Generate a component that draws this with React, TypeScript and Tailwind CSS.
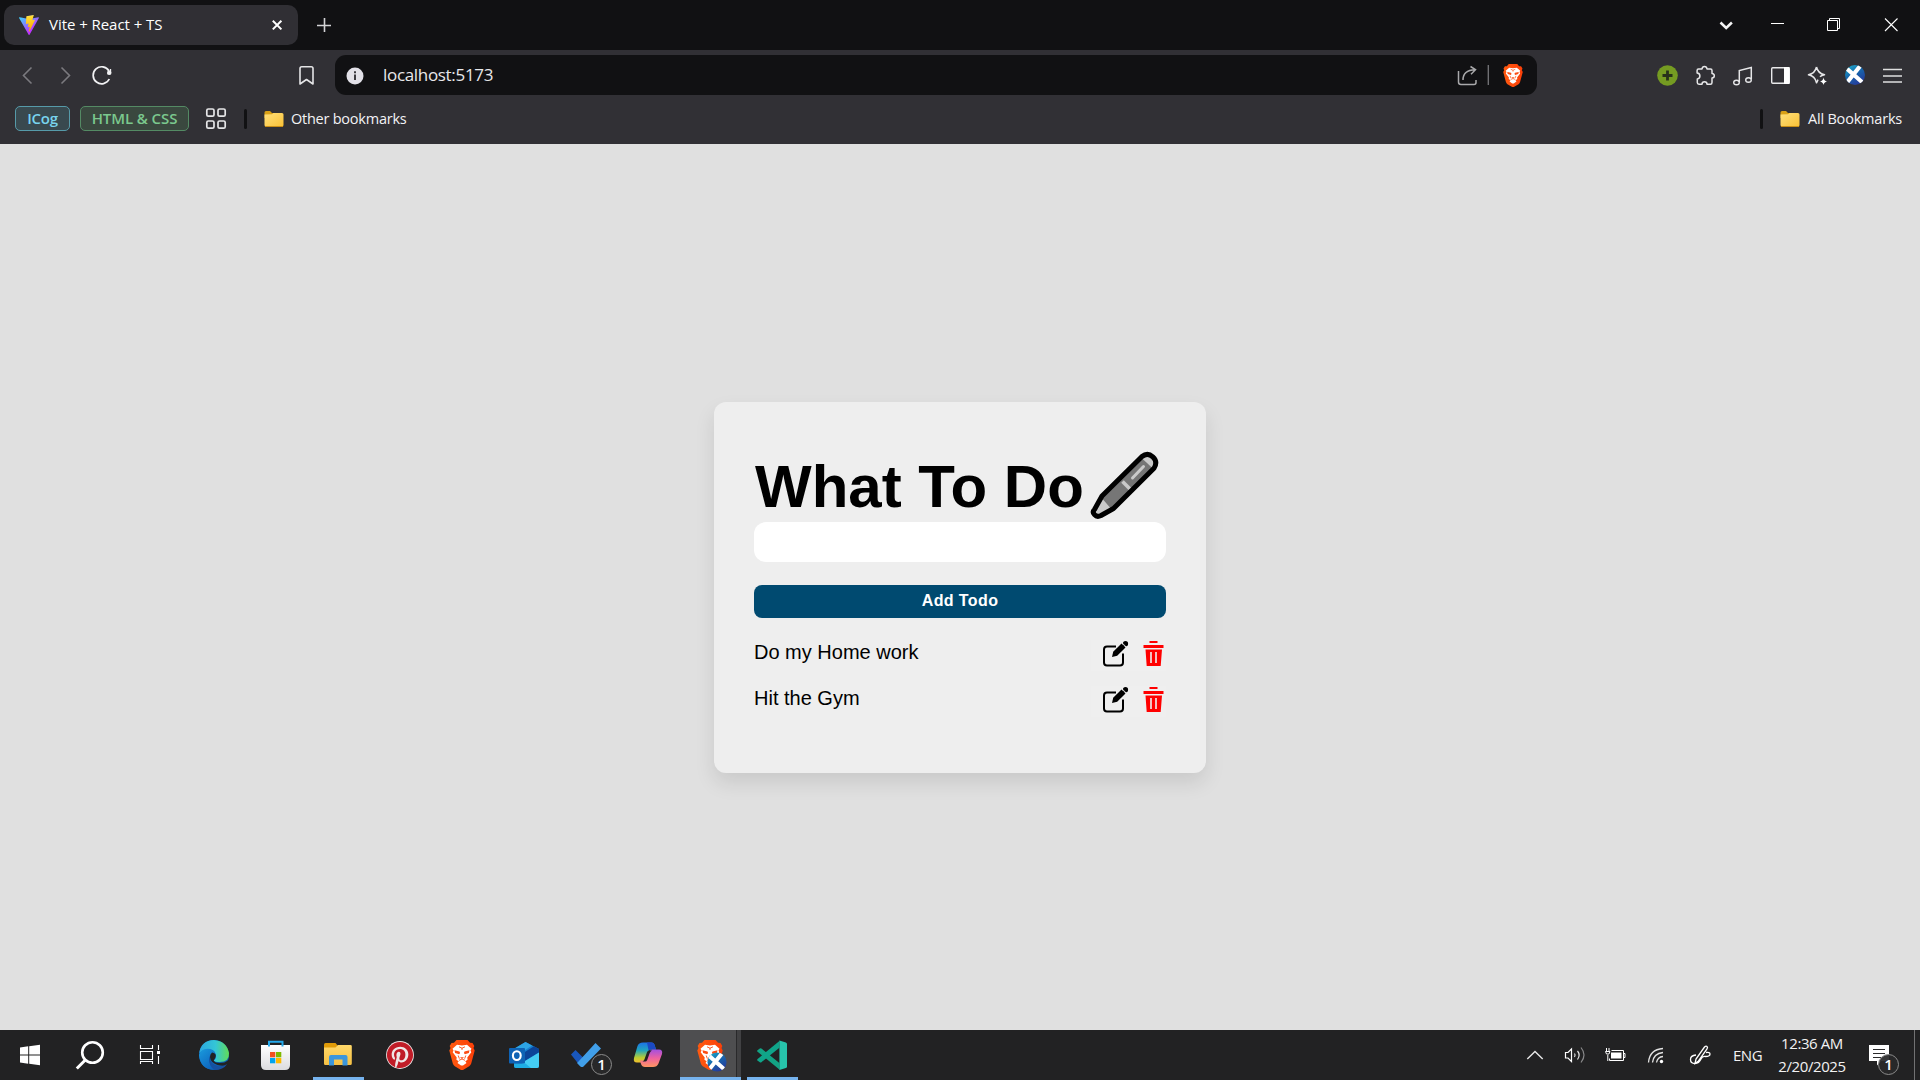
import React from "react";
import { FaPinterest } from "react-icons/fa";

type ArtProps = { x: number; y: number; w: number; h: number; className?: string; children: React.ReactNode };

// Drawing whose viewBox is expressed in window coordinates.
function Art({ x, y, w, h, className = "", children }: ArtProps) {
  return (
    <svg width={w} height={h} viewBox={`${x} ${y} ${w} ${h}`} fill="none" className={`block shrink-0 ${className}`}>
      {children}
    </svg>
  );
}

function Lion({ x, y, w, h }: { x: number; y: number; w: number; h: number }) {
  return (
    <svg x={x} y={y} width={w} height={h} viewBox="0 0 26 30" preserveAspectRatio="none">
      <defs>
        <linearGradient id="brave" x1="0" x2="1">
          <stop stopColor="#ff5a10" />
          <stop offset="1" stopColor="#fb3f08" />
        </linearGradient>
      </defs>
      <path d="M7.500 0h11l2.500 2.800 2.500.2 1.800 3-.8 2 1.200 2.500-3.500 13q-.6 1.800-2 2.800l-6.200 3.700h-2l-6.200-3.700q-1.400-1-2-2.800L.3 10.500 1.500 8 .7 6l1.800-3 2.500-.2z" fill="url(#brave)" />
      <path d="M8 4.800l5 .7 5-.7 4.500 4-1 1.700.8 1.800-4 5.200.3 2.200-2.300 1.600 1.200 1.600-3.500 2.600h-2l-3.500-2.600 1.200-1.600-2.300-1.600.3-2.200-4-5.200.8-1.800-1-1.700z" fill="#fff" />
      <path d="M5.500 10.300l5 1.200.6 1.400-1 1.300-4-1.300zM20.500 10.300l-5 1.200-.6 1.400 1 1.300 4-1.300z" fill="#fb4d14" />
      <path d="M10 6.800l3 1.400 3-1.400M13 8v2M9.200 15.500l1.200 3.200M16.800 15.500l-1.200 3.200M10 20.300l3-1.300 3 1.300" stroke="#fb4d14" strokeWidth="0.900" fill="none" />
      <path d="M11 17.300h4l-2 1.800z" fill="#fb4d14" />
    </svg>
  );
}

function Saltire({ cx, cy, r, id }: { cx: number; cy: number; r: number; id: string }) {
  return (
    <g>
      <defs>
        <clipPath id={id}>
          <circle cx={cx} cy={cy} r={r} />
        </clipPath>
        <linearGradient id={`${id}g`} x1="0" x2="0.6" y1="0" y2="1">
          <stop stopColor="#20b5cf" />
          <stop offset="0.5" stopColor="#1668ad" />
          <stop offset="1" stopColor="#253b9b" />
        </linearGradient>
      </defs>
      <circle cx={cx} cy={cy} r={r} fill={`url(#${id}g)`} />
      <path
        d={`M${cx - r} ${cy - r * 0.8}L${cx + r * 0.75} ${cy + r * 0.75}M${cx + r * 0.6} ${cy - r}L${cx - r * 0.8} ${cy + r * 0.75}`}
        stroke="#fff"
        strokeWidth={r * 0.42}
        clipPath={`url(#${id})`}
      />
    </g>
  );
}

function ViteLogo() {
  return (
    <svg width="20" height="20" viewBox="0 0 256 257" className="block shrink-0">
      <defs>
        <linearGradient id="va" x1="-.8%" x2="57.6%" y1="7.6%" y2="78.4%">
          <stop stopColor="#41d1ff" />
          <stop offset="1" stopColor="#bd34fe" />
        </linearGradient>
        <linearGradient id="vb" x1="43.400%" x2="50.300%" y1="2.200%" y2="89%">
          <stop stopColor="#ffea83" />
          <stop offset=".083" stopColor="#ffdd35" />
          <stop offset="1" stopColor="#ffa800" />
        </linearGradient>
      </defs>
      <path fill="url(#va)" d="M255.153 37.938L134.897 252.976c-2.483 4.44-8.862 4.466-11.382.048L.875 37.958c-2.746-4.814 1.371-10.646 6.827-9.67l120.385 21.517a6.537 6.537 0 0 0 2.322-.004l117.867-21.483c5.438-.991 9.574 4.796 6.877 9.62Z" />
      <path fill="url(#vb)" d="M185.432.063L96.44 17.501a3.268 3.268 0 0 0-2.634 3.014l-5.474 92.456a3.268 3.268 0 0 0 3.997 3.378l24.777-5.718c2.318-.535 4.413 1.507 3.936 3.838l-7.361 36.047c-.495 2.426 1.782 4.5 4.151 3.78l15.304-4.649c2.372-.72 4.652 1.36 4.15 3.788l-11.698 56.621c-.732 3.542 3.979 5.473 5.943 2.437l1.313-2.028l72.516-144.72c1.215-2.423-.88-5.186-3.54-4.672l-25.505 4.922c-2.396.462-4.435-1.77-3.759-4.114l16.646-57.705c.677-2.35-1.37-4.583-3.769-4.113Z" />
    </svg>
  );
}

function Folder({ className = "" }: { className?: string }) {
  return (
    <svg width="20" height="18" viewBox="0 0 20 18" className={`block shrink-0 ${className}`}>
      <defs>
        <linearGradient id="fold" x1="0" x2="1" y1="0" y2="1">
          <stop stopColor="#ffe07c" />
          <stop offset="1" stopColor="#f9c136" />
        </linearGradient>
      </defs>
      <path d="M.5 2.500Q.5 1 2 1h4l2 2h9v5H.5z" fill="#d9a016" />
      <path d="M.5 4.500L8 4.300 9.500 3H18q1.500 0 1.500 1.500V15q0 1.500-1.500 1.500H2Q.5 16.500.5 15z" fill="url(#fold)" />
      <path d="M1 16.500h18" stroke="#c98e16" />
    </svg>
  );
}

function TabStrip() {
  return (
    <div className="flex h-[50px] items-center bg-[#111113]">
      <div className="ml-1 flex h-10 w-[294px] items-center rounded-[10px] bg-[#302f34] pl-[15px] text-white">
        <ViteLogo />
        <span className="ml-[10px] w-[222px] pb-[2px] text-[15px] leading-5 tracking-[-0.050px]">Vite + React + TS</span>
        <Art x={271} y={19} w={12} h={12}>
          <path d="M272.800 20.800l8.600 8.600m0-8.600l-8.600 8.600" stroke="#fff" strokeWidth="2" />
        </Art>
      </div>
      <Art x={316} y={17} w={16} h={16} className="ml-[18px]">
        <path d="M317 25.500h14M324.500 18v14" stroke="#d4d4d6" strokeWidth="1.600" />
      </Art>
      <div className="ml-auto flex">
        <Art x={1700} y={0} w={50} h={50}>
          <path d="M1720.500 22.500l5.700 5.500 5.700-5.500" stroke="#f4f4f4" strokeWidth="2.500" />
        </Art>
        <Art x={1750} y={0} w={56} h={50}>
          <path d="M1771 23.500h13" stroke="#fff" />
        </Art>
        <Art x={1806} y={0} w={57} h={50}>
          <path d="M1827.500 20.500h10v10h-10zM1829.500 20.500v-2h10v10h-2" stroke="#fff" />
        </Art>
        <Art x={1863} y={0} w={57} h={50}>
          <path d="M1885 18.500l12.500 12.500m0-12.500l-12.500 12.500" stroke="#fff" strokeWidth="1.100" />
        </Art>
      </div>
    </div>
  );
}

function Toolbar() {
  return (
    <div className="flex h-[50px] items-center">
      <Art x={0} y={50} w={46} h={50}>
        <path d="M31.500 67.500l-8 8 8 8" stroke="#7b7a7f" strokeWidth="1.600" />
      </Art>
      <Art x={46} y={50} w={38} h={50}>
        <path d="M61.500 67.500l8 8-8 8" stroke="#7b7a7f" strokeWidth="1.600" />
      </Art>
      <Art x={84} y={50} w={40} h={50}>
        <path d="M109 71A8.500 8.500 0 1 0 109.300 79" stroke="#f1f1f3" strokeWidth="1.700" />
        <circle cx="109.200" cy="72.800" r="2.200" fill="#f1f1f3" />
        <path d="M110.500 69v4.500h-3" stroke="#f1f1f3" strokeWidth="1.300" />
      </Art>
      <Art x={290} y={50} w={45} h={50} className="ml-[166px]">
        <path d="M300 84V68.500q0-1.700 1.700-1.700h9.600q1.700 0 1.700 1.700V84l-6.500-4.500z" stroke="#e4e4e6" strokeWidth="1.600" strokeLinejoin="round" />
      </Art>
      <div className="flex h-10 w-[1202px] items-center rounded-[11px] bg-[#111113]">
        <Art x={335} y={55} w={48} h={40}>
          <circle cx="355" cy="76" r="8.500" fill="#e2e1e8" />
          <path d="M355 74.500v5.500M355 71.300v2" stroke="#2a292e" strokeWidth="1.800" />
        </Art>
        <span className="text-[17px] leading-6 tracking-[-0.32px] text-[#e8e8ea]">localhost:5173</span>
        <Art x={1450} y={55} w={87} h={40} className="ml-auto">
          <path d="M1458.500 71v11q0 2.500 2.500 2.500h13q2 0 2-2V80" stroke="#a9a9ab" strokeWidth="1.500" />
          <path d="M1463 80q0-10 12-10.300M1470.500 66.500l5 3.200-4.500 4.500" stroke="#a9a9ab" strokeWidth="1.500" />
          <path d="M1488.300 65v20" stroke="#77777a" strokeWidth="1.300" />
          <Lion x={1503} y={64} w={20} h={23} />
        </Art>
      </div>
      <div className="ml-auto flex">
        <Art x={1648} y={50} w={38} h={50}>
          <circle cx="1667.500" cy="75.500" r="10.300" fill="#759b22" />
          <path d="M1662.500 75.500h10M1667.500 70.500v10" stroke="#27311a" strokeWidth="2.800" />
        </Art>
        <Art x={1686} y={50} w={38} h={50}>
          <path d="M1698.500 69H1702q.3-2.500 2.500-2.500t2.500 2.500h3.500q1.500 0 1.500 1.500V73.500q2.300.2 2.300 2.300t-2.300 2.300V82.500q0 1.800-1.600 1.800H1707q0-2.500-2.500-2.500t-2.500 2.500h-3q-1.700 0-1.700-1.700V79q2.600-.3 2.600-3t-2.800-3V70.500q0-1.500 1.400-1.500z" stroke="#e6e6e8" strokeWidth="1.500" strokeLinejoin="round" />
        </Art>
        <Art x={1724} y={50} w={38} h={50}>
          <path d="M1739.300 82V70.500l12-3V79" stroke="#e6e6e8" strokeWidth="1.500" />
          <ellipse cx="1736.500" cy="82.500" rx="2.800" ry="2.300" stroke="#e6e6e8" strokeWidth="1.400" />
          <ellipse cx="1748.500" cy="80" rx="2.800" ry="2.300" stroke="#e6e6e8" strokeWidth="1.400" />
        </Art>
        <Art x={1762} y={50} w={38} h={50}>
          <rect x="1771.700" y="67.700" width="17.600" height="15.600" rx="1" stroke="#e9e9eb" strokeWidth="1.400" />
          <path d="M1784 67h5.500v17h-5.500z" fill="#fff" />
        </Art>
        <Art x={1800} y={50} w={36} h={50}>
          <path d="M1816.500 67q1.200 6 8 7.800q-3 .6-4.500 2M1816.500 67q-1.500 6.500-8 7.800q6.500 1.200 8 8q1-2 1.500-3.200" stroke="#e6e6e8" strokeWidth="1.500" strokeLinejoin="round" />
          <path d="M1823.500 77.500q.5 3.500 3.500 4q-3 .5-3.500 3.500q-.5-3-3.500-3.500q3-.5 3.500-4z" fill="#fff" />
        </Art>
        <Art x={1836} y={50} w={38} h={50}>
          <Saltire cx={1855} cy={75} r={10} id="s1" />
        </Art>
        <Art x={1874} y={50} w={46} h={50}>
          <path d="M1883 69.500h19M1883 76h19M1883 82h19" stroke="#dededf" strokeWidth="1.500" />
        </Art>
      </div>
    </div>
  );
}

function BookmarksBar() {
  return (
    <div className="flex h-[44px] items-start pt-[6px] text-[14.500px] leading-[25px] text-[#f3f3f5]">
      <div className="ml-[15px] flex h-[25px] w-[55px] items-center justify-center rounded-[5px] border border-[#569aa9] bg-[#39494f] text-[15px] font-semibold tracking-[-0.300px] text-[#78d4ee]">ICog</div>
      <div className="ml-[10px] flex h-[25px] w-[109px] items-center justify-center rounded-[5px] border border-[#548a64] bg-[#3a483f] text-[15px] font-semibold tracking-[-0.100px] whitespace-nowrap text-[#7bc88e]">HTML &amp; CSS</div>
      <Art x={205} y={106} w={22} h={25} className="ml-4">
        <g stroke="#e6e6e8" strokeWidth="1.700">
          <rect x="206.800" y="109" width="7.200" height="7.200" rx="1.500" />
          <rect x="218" y="109" width="7.200" height="7.200" rx="1.500" />
          <rect x="206.800" y="121" width="7.200" height="7.200" rx="1.500" />
          <rect x="218" y="121" width="7.200" height="7.200" rx="1.500" />
        </g>
      </Art>
      <div className="mt-[3px] ml-[17px] h-5 w-[3px] rounded-full bg-[#111113]" />
      <Folder className="mt-1 ml-[17px]" />
      <span className="ml-[7px] tracking-[-0.240px]">Other bookmarks</span>
      <div className="mt-[3px] ml-auto h-5 w-[3px] rounded-full bg-[#111113]" />
      <Folder className="mt-1 ml-[17px]" />
      <span className="ml-2 w-[112px] tracking-[-0.200px]">All Bookmarks</span>
    </div>
  );
}

function Pen() {
  return (
    <Art x={1090} y={450} w={70} h={70} className="ml-[6px]">
      <path d="M1096 514.800q-2.500-1.500-1-5l7.500-13.500 38.500-39q5.500-5 11.500-1t1.500 12L1113.500 508.500l-12.500 6q-3 1.500-5 .3z" fill="#767676" />
      <path d="M1096 514.800q-2.500-1.500-1-5l6.500-12 10 11.500-10.500 5.500q-3 1.500-5 0z" fill="#cacaca" />
      <path d="M1141 457.500l12.500 11.500q4-6 1-11t-13.500-.5z" fill="#cacaca" />
      <path d="M1122.500 481.500l8 8" stroke="#cacaca" strokeWidth="3.500" />
      <path d="M1132.500 478l11-11.500" stroke="#cacaca" strokeWidth="3" strokeLinecap="round" />
      <path d="M1094.500 509.500l7.500-13.500 40-39.500q5.500-4.500 10.800.3t1.200 11.500L1113.500 508.500l-12.500 7q-4 2-6.500-.8t0-5.200z" stroke="#000" strokeWidth="5" strokeLinejoin="round" />
    </Art>
  );
}

function TodoRow({ text }: { text: string }) {
  return (
    <li className="flex h-[31px] items-start justify-between">
      <span className="text-[20px] leading-[24px] text-black">{text}</span>
      <span className="flex bg-[#efefef]">
        <Art x={1091} y={640} w={43} h={31}>
          <path d="M1116 646.500h-9q-3 0-3 3V662.500q0 3 3 3h13q3 0 3-3V653.500" stroke="#000" strokeWidth="2" />
          <path d="M1112 657l1.200-5.300 8.300-8.300 4 4-8.300 8.300z" fill="#000" />
          <circle cx="1125.500" cy="643.700" r="2.600" fill="#000" />
          <path d="M1121.700 642.500l4.500 4.500" stroke="#efefef" strokeWidth="1" />
        </Art>
        <Art x={1134} y={640} w={32} h={31}>
          <path d="M1149.500 641h8v2h-8zM1143.500 645h20v3h-20zM1145.500 649.500h16.500l-1.300 16.500h-14z" fill="#f00" />
          <path d="M1151 652v11M1156 652v11" stroke="#efefef" strokeWidth="1.600" />
        </Art>
      </span>
    </li>
  );
}

function TodoCard() {
  return (
    <main className="mt-[258px] h-[371px] w-[492px] rounded-[12px] bg-[#eeeeee] px-10 pt-12 font-['Liberation_Sans',Arial,sans-serif] shadow-[0_10px_20px_rgba(0,0,0,0.1)]">
      <div className="flex h-[72px] items-start">
        <h1 className="w-[330px] pt-px pl-px text-[60px] leading-[71px] font-bold whitespace-nowrap text-black">What To Do</h1>
        <Pen />
      </div>
      <input className="block h-10 w-full rounded-[12px] bg-white px-3 outline-none" />
      <button className="mt-[23px] block h-[33px] w-full rounded-[8px] bg-[#004a70] pb-[2px] text-[16px] font-bold tracking-[0.400px] text-white">Add Todo</button>
      <ul className="mt-[22px] flex flex-col gap-[15px]">
        <TodoRow text="Do my Home work" />
        <TodoRow text="Hit the Gym" />
      </ul>
    </main>
  );
}

function Badge({ x, y }: { x: number; y: number }) {
  return (
    <g>
      <circle cx={x} cy={y} r="10" fill="#29292a" fillOpacity="0.93" stroke="#8b8b8b" strokeWidth="1" />
      <text x={x} y={y + 5} textAnchor="middle" fontSize="15" fontWeight="600" fill="#fff">1</text>
    </g>
  );
}

function Taskbar() {
  return (
    <div className="flex h-[50px] bg-[#222223]">
      <Art x={0} y={1030} w={60} h={50}>
        <path d="M20 1047.500l8.200-1.200v8.200H20zM29.200 1046.200l10.800-1.400v9.700H29.200zM20 1055.500h8.200v8.300L20 1062.600zM29.200 1055.500H40v9.700l-10.800-1.500z" fill="#fff" />
      </Art>
      <Art x={60} y={1030} w={60} h={50}>
        <circle cx="92.500" cy="1052.500" r="10.300" stroke="#fff" strokeWidth="2.600" />
        <path d="M85.300 1060l-8.500 8.500" stroke="#fff" strokeWidth="3" />
      </Art>
      <Art x={120} y={1030} w={60} h={50}>
        <path d="M140.500 1045v3.500h12V1045M140.500 1051.500h12v8h-12zM140.500 1064v-2.500h12v2.500M158.500 1045v5M158.500 1056v8" stroke="#fff" strokeWidth="1.100" />
        <path d="M157 1051h3v3h-3z" fill="#fff" />
      </Art>
      <Art x={180} y={1030} w={65} h={50}>
        <defs>
          <linearGradient id="e1" x1="0" x2="1"><stop stopColor="#2ba7e0" /><stop offset="0.55" stopColor="#34c6d6" /><stop offset="1" stopColor="#62dc55" /></linearGradient>
          <linearGradient id="e2" x1="0" x2="0.7" y1="0" y2="1"><stop stopColor="#1a9bdd" /><stop offset="1" stopColor="#0d63bd" /></linearGradient>
        </defs>
        <circle cx="214" cy="1055" r="15" fill="#0c63b4" />
        <path d="M199.200 1053q1.800-12.500 14.800-13 12.500 1 15 13 .5 9-9.500 9-4.500 0-6-1.500 3-2 2.500-5.500-1.500-6-9-5-5 .5-7.800 3z" fill="url(#e1)" />
        <path d="M199 1055q1.500-6 8.500-6.200 6.500.2 8 4.700-5-.5-6.500 4.500-.5 6.500 4.500 11.800-13-.3-14.500-14.800z" fill="url(#e2)" />
        <path d="M212 1052.500q4 .5 3.700 3.500-.2 2-2 4.500 1 2.500 6 2.500 5.500 0 8-2.500l1.800 1-4 4q-4 .5-8-.5-7-2.500-7.500-8 0-3 2-4.500z" fill="#222223" />
        <path d="M209.200 1057q1 7 8.500 9 5 1 9.500-2-4 6-12.500 6-6.500-4.500-5.500-13z" fill="#1750a0" />
      </Art>
      <Art x={245} y={1030} w={60} h={50}>
        <defs><linearGradient id="st" x1="0" x2="0" y1="0" y2="1"><stop stopColor="#fff" /><stop offset="1" stopColor="#dcdcdf" /></linearGradient></defs>
        <path d="M261 1045h29v20q0 5-5 5h-19q-5 0-5-5z" fill="url(#st)" />
        <path d="M269 1046.500v-4.700h13.500v4.700" stroke="#25a9ec" strokeWidth="2" />
        <path d="M270 1052h5.300v5.300H270z" fill="#f25022" /><path d="M276 1052h5.300v5.300H276z" fill="#7fba00" />
        <path d="M270 1058h5.300v5.300H270z" fill="#00a4ef" /><path d="M276 1058h5.300v5.300H276z" fill="#ffb900" />
      </Art>
      <Art x={305} y={1030} w={67} h={50}>
        <defs><linearGradient id="fx" x1="0" x2="0" y1="0" y2="1"><stop stopColor="#ffd869" /><stop offset="1" stopColor="#f5c044" /></linearGradient></defs>
        <path d="M324 1044.500q0-1.500 1.500-1.500h10l2.500 3v4h-14z" fill="#e09b08" />
        <path d="M324 1047.500h11.500l2.500-2.500h12.500q1.300 0 1.300 1.300v17.200q0 1.500-1.500 1.500h-25q-1.300 0-1.300-1.500z" fill="url(#fx)" />
        <path d="M329 1065.500v-8.500q0-2 2-2h14.500q2 0 2 2v8.500h-5v-6h-8.500v6z" fill="#3b96dc" />
        <path d="M313 1077h51v3h-51z" fill="#76b3ee" />
      </Art>
      <Art x={372} y={1030} w={56} h={50}>
        <circle cx="400" cy="1055" r="13.900" fill="#efe6e6" />
        <FaPinterest x={386.500} y={1041.500} size={27} color="#c01c27" />
      </Art>
      <Art x={428} y={1030} w={67} h={50}>
        <Lion x={449} y={1040} w={26} h={30} />
      </Art>
      <Art x={495} y={1030} w={60} h={50}>
        <path d="M514 1049l11.500-7 13.500 7v17q0 2-2 2h-21q-2 0-2-2z" fill="#1681d1" />
        <path d="M513.500 1049l12-7 6.500 3.500-12 8z" fill="#2da4e4" />
        <path d="M520 1055l14-8.800 5 2.800v3.500l-14 8.500z" fill="#0c4498" />
        <path d="M525 1061l14-8.500v13.500q0 2-2 2h-19z" fill="#44cdf3" />
        <path d="M514 1063.500h11.500l5.500 4.500h-15q-2 0-2-2z" fill="#1eaee4" />
        <rect x="509" y="1048" width="16" height="15.500" rx="1" fill="#0f63b5" />
        <ellipse cx="516.800" cy="1055.600" rx="3.900" ry="4.400" stroke="#fff" strokeWidth="2.100" />
      </Art>
      <Art x={555} y={1030} w={65} h={50}>
        <path d="M571 1054.500l4.500-4.500 9.500 9.500-4.500 7z" fill="#1957bd" />
        <path d="M578.500 1061.500L595.500 1043l5.500 5.500-17.500 18q-1.500 1-3 0l-3.500-3.500z" fill="#419fe9" />
        <Badge x={601.5} y={1064.500} />
      </Art>
      <Art x={620} y={1030} w={60} h={50}>
        <defs>
          <linearGradient id="c1" x1="0" x2="0" y1="0" y2="1"><stop stopColor="#1c72e8" /><stop offset="0.4" stopColor="#21a7bb" /><stop offset="0.75" stopColor="#b7cc35" /><stop offset="1" stopColor="#f3c02c" /></linearGradient>
          <linearGradient id="c2" x1="0" x2="0" y1="0" y2="1"><stop stopColor="#a34fe0" /><stop offset="0.5" stopColor="#ee62a0" /><stop offset="1" stopColor="#ff9660" /></linearGradient>
        </defs>
        <path d="M643 1042.500h8.500q2.500 0 3.300 3l1.200 4h-5q-2 0-3 3l-2.500 8q-.8 2-3 2H637q-4 0-3-4.500l3.500-12q1.200-3.500 5.500-3.500z" fill="url(#c1)" />
        <path d="M647 1042.500h4.500q2.500 0 3.300 3l1.200 4h-5q-1.500 0-2.300 1.500z" fill="#1b49c4" />
        <path d="M653 1067h-8q-3 0-4-3l-1-3.500h4q2 0 3-3l2.500-6q.8-2 3-2H659q4 0 3 4.500l-3.500 9.500q-1.500 3.500-5.500 3.500z" fill="url(#c2)" />
        <path d="M649 1050.500h3q-1.500.5-2.300 2.500l-2.500 7q-.7 1.500-2 1.500h-2.700q1.200-.3 2-2.200l2.500-7q.6-1.600 2-1.800z" fill="#222223" />
      </Art>
      <div className="flex w-[61px] bg-[#4e4e50]">
        <Art x={680} y={1030} w={61} h={50}>
          <path d="M737 1030h4v47h-4z" fill="#414143" />
          <path d="M736.500 1030v47" stroke="#29292b" />
          <Lion x={697} y={1040} w={26} h={30} />
          <Saltire cx={717} cy={1062} r={9.600} id="s2" />
          <path d="M680 1077h61v3h-61z" fill="#76b3ee" />
        </Art>
      </div>
      <Art x={741} y={1030} w={64} h={50}>
        <path d="M757.500 1050.300l2.300-1.900q.8-.5 1.600.1l18 14.500v6.500l-21.800-17.800q-.9-.8-.1-1.400z" fill="#13a384" />
        <path d="M757.500 1060.500l2.300 1.800q.8.500 1.600-.1l18-14.500V1041l-21.800 18q-.9.800-.1 1.500z" fill="#0fa58a" />
        <path d="M779.400 1040.500l6.500 2q1.100.5 1.100 1.600v22.300q0 1.100-1.100 1.600l-6.500 2z" fill="#27c4ab" />
        <path d="M747 1077h51v3h-51z" fill="#76b3ee" />
      </Art>
      <div className="ml-auto flex text-[#f2f2f2]">
        <Art x={1515} y={1030} w={40} h={50}>
          <path d="M1527.300 1059l7.700-7.500 7.700 7.500" stroke="#e8e8e8" strokeWidth="1.400" />
        </Art>
        <Art x={1555} y={1030} w={40} h={50}>
          <path d="M1565.500 1052.500h2.500l3.500-3.500v12.500l-3.500-3.500h-2.500z" stroke="#fff" strokeWidth="1.200" />
          <path d="M1574.500 1053.500q1.300 1.700 0 3.500M1577.500 1051q3.300 4 0 8.500" stroke="#e9e9e9" strokeWidth="1.200" />
          <path d="M1581 1047.500q6 7.500 0 15" stroke="#89898a" strokeWidth="1.200" />
        </Art>
        <Art x={1595} y={1030} w={40} h={50}>
          <path d="M1611.500 1050.500h12v10h-14v-2M1624 1053.500h1v4h-1M1606.500 1048v3M1609 1048v3M1605.500 1051.500h4.500l-1 2.500h-2.500zM1607.800 1055v6" stroke="#fff" strokeWidth="1" />
          <path d="M1611 1052.500h10.500v6H1611z" fill="#fff" />
        </Art>
        <Art x={1635} y={1030} w={40} h={50}>
          <path d="M1648.500 1062.500q1-13 14.500-14M1652.500 1062.500q1-9 10.500-10M1656.500 1062.500q1-5.500 6.500-6" stroke="#e3e3e3" strokeWidth="1.300" />
          <circle cx="1661.500" cy="1061.500" r="1.700" fill="#fff" />
        </Art>
        <Art x={1675} y={1030} w={50} h={50}>
          <path d="M1695 1063.500l1-4.500 8.500-12q1.500-1.500 2.500-.5t0 2.500l-8.500 12-3.500 2.500zM1696 1055q-5.500.5-5.500 4.500t4.500 4q4 0 6-4.500 1.500-3 4.500-2.500 4.500 0 4.500-2.500 0-2-4-1.500" stroke="#fff" strokeWidth="1.300" />
        </Art>
        <span className="w-[53px] pl-[8px] text-[15px] leading-[50px] tracking-[-0.500px]">ENG</span>
        <div className="w-[68px] text-center text-[15px] leading-[23px] tracking-[-0.400px] whitespace-nowrap">
          <div className="mt-[2px]">12:36 AM</div>
          <div>2/20/2025</div>
        </div>
        <Art x={1846} y={1030} w={74} h={50}>
          <path d="M1869 1045h20v16h-8l-4 4.500v-4.500h-8z" fill="#fff" />
          <path d="M1873 1049.500h12M1873 1053.500h12M1873 1057.500h8" stroke="#2a2a2b" strokeWidth="1.200" />
          <Badge x={1888.5} y={1064.500} />
          <path d="M1914.500 1030v50" stroke="#727273" />
        </Art>
      </div>
    </div>
  );
}

export default function App() {
  return (
    <div className="flex h-[1080px] w-[1920px] flex-col overflow-hidden bg-[#e0e0e0] font-['Open_Sans','Noto_Sans',sans-serif]">
      <TabStrip />
      <header className="bg-[#313035]">
        <Toolbar />
        <BookmarksBar />
      </header>
      <div className="flex flex-1 items-start justify-center">
        <TodoCard />
      </div>
      <Taskbar />
    </div>
  );
}
